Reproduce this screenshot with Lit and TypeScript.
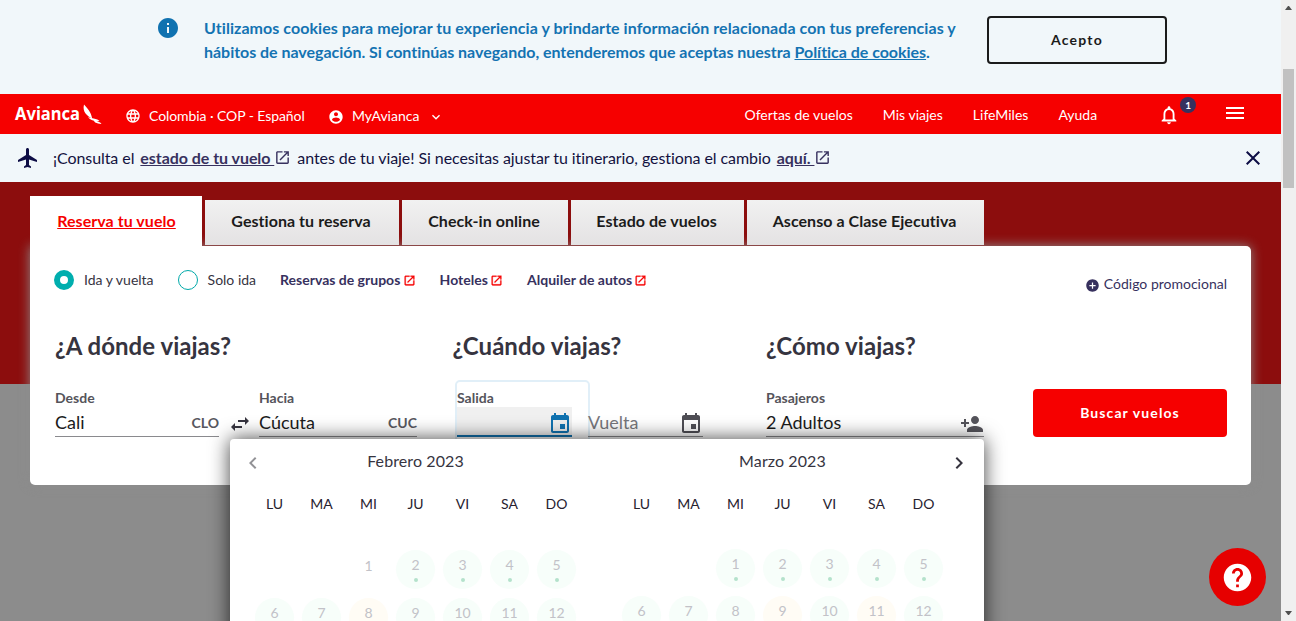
import { LitElement, html, css, svg, nothing } from "lit";
import { customElement, property } from "lit/decorators.js";

const DISC = "M12 2C6.48 2 2 6.48 2 12s4.48 10 10 10 10-4.48 10-10S17.52 2 12 2z";

const ICONS: Record<string, string> = {
  info: DISC + "m1 15h-2v-6h2v6zm0-8h-2V7h2v2z",
  globe:
    "M11.99 2C6.47 2 2 6.48 2 12s4.47 10 9.99 10C17.52 22 22 17.52 22 12S17.52 2 11.99 2zm6.93 6h-2.95c-.32-1.25-.78-2.45-1.38-3.56 1.84.63 3.37 1.91 4.33 3.56zM12 4.04c.83 1.2 1.48 2.53 1.91 3.96h-3.82c.43-1.43 1.08-2.76 1.91-3.96zM4.26 14C4.1 13.36 4 12.69 4 12s.1-1.36.26-2h3.38c-.08.66-.14 1.32-.14 2 0 .68.06 1.34.14 2H4.26zm.82 2h2.95c.32 1.25.78 2.45 1.38 3.56-1.84-.63-3.37-1.9-4.33-3.56zm2.95-8H5.08c.96-1.66 2.49-2.93 4.33-3.56C8.81 5.55 8.35 6.75 8.03 8zM12 19.96c-.83-1.2-1.48-2.53-1.91-3.96h3.82c-.43 1.43-1.08 2.76-1.91 3.96zM14.34 14H9.66c-.09-.66-.16-1.32-.16-2 0-.68.07-1.35.16-2h4.68c.09.65.16 1.32.16 2 0 .68-.07 1.34-.16 2zm.25 5.56c.6-1.11 1.06-2.31 1.38-3.56h2.95c-.96 1.65-2.49 2.93-4.33 3.56zM16.36 14c.08-.66.14-1.32.14-2 0-.68-.06-1.34-.14-2h3.38c.16.64.26 1.31.26 2s-.1 1.36-.26 2h-3.38z",
  account:
    DISC +
    "m0 3c1.66 0 3 1.34 3 3s-1.34 3-3 3-3-1.34-3-3 1.34-3 3-3zm0 14.2c-2.5 0-4.71-1.28-6-3.22.03-1.99 4-3.08 6-3.08 1.99 0 5.97 1.09 6 3.08-1.29 1.94-3.5 3.22-6 3.22z",
  down: "M7.41 8.59L12 13.17l4.59-4.58L18 10l-6 6-6-6z",
  bell: "M12 22c1.1 0 2-.9 2-2h-4c0 1.1.9 2 2 2zm6-6v-5c0-3.07-1.63-5.64-4.5-6.32V4c0-.83-.67-1.5-1.5-1.5s-1.5.67-1.5 1.5v.68C7.64 5.36 6 7.92 6 11v5l-2 2v1h16v-1l-2-2zm-2 1H8v-6c0-2.48 1.51-4.5 4-4.5s4 2.02 4 4.5v6z",
  menu: "M3 18h18v-2H3v2zm0-5h18v-2H3v2zm0-7v2h18V6H3z",
  plane:
    "M21 16v-2l-8-5V3.5c0-.83-.67-1.5-1.5-1.5S10 2.67 10 3.5V9l-8 5v2l8-2.5V19l-2 1.5V22l3.5-1 3.5 1v-1.5L13 19v-5.5l8 2.5z",
  open: "M19 19H5V5h7V3H5c-1.11 0-2 .9-2 2v14c0 1.1.89 2 2 2h14c1.1 0 2-.9 2-2v-7h-2v7zM14 3v2h3.59l-9.83 9.83 1.41 1.41L19 6.41V10h2V3h-7z",
  close:
    "M19 6.41L17.59 5 12 10.59 6.41 5 5 6.41 10.59 12 5 17.59 6.41 19 12 13.41 17.59 19 19 17.59 13.41 12z",
  plus: DISC + "m5 11h-4v4h-2v-4H7v-2h4V7h2v4h4v2z",
  swap: "M6.99 11L3 15l3.99 4v-3H14v-2H6.99v-3zM21 9l-3.99-4v3H10v2h7.01v3L21 9z",
  event:
    "M17 12h-5v5h5v-5zM16 1v2H8V1H6v2H5c-1.11 0-1.99.9-1.99 2L3 19c0 1.1.89 2 2 2h14c1.1 0 2-.9 2-2V5c0-1.1-.9-2-2-2h-1V1h-2zm3 18H5V8h14v11z",
  addPerson:
    "M15 12c2.21 0 4-1.79 4-4s-1.79-4-4-4-4 1.79-4 4 1.79 4 4 4zm-9-2V7H4v3H1v2h3v3h2v-3h3v-2H6zm9 4c-2.67 0-8 1.34-8 4v2h16v-2c0-2.66-5.33-4-8-4z",
  left: "M15.41 7.41L14 6l-6 6 6 6 1.41-1.41L10.83 12z",
  right: "M10 6L8.59 7.41 13.17 12l-4.58 4.59L10 18l6-6z",
  help:
    DISC +
    "m1 17h-2v-2h2v2zm2.07-7.75l-.9.92C13.45 12.9 13 13.5 13 15h-2v-.5c0-1.1.45-2.1 1.17-2.83l1.24-1.26c.37-.36.59-.86.59-1.41 0-1.1-.9-2-2-2s-2 .9-2 2H8c0-2.21 1.79-4 4-4s4 1.79 4 4c0 .88-.36 1.68-.93 2.25z",
};

const icon = (name: string, size: number, cls = "") => html`<svg
  class="icon ${cls}" width=${size} height=${size} viewBox="0 0 24 24" aria-hidden="true"
>${svg`<path d=${ICONS[name]}></path>`}</svg>`;

const base = css`
  * { box-sizing: border-box; }
  .icon { display: block; flex: none; fill: currentColor; }
  a { color: inherit; text-decoration: none; white-space: nowrap; }
  button { font: inherit; margin: 0; }
`;

/** One month of the date picker: weekday header and the first weeks of days. */
@customElement("month-grid")
class MonthGrid extends LitElement {
  @property() name = "";
  @property({ type: Number }) first = 0;
  @property({ attribute: false }) sale: number[] = [];
  @property({ attribute: false }) plain: number[] = [];

  static styles = [base, css`
    :host { display: block; width: 329px; }
    .name { margin: 0; text-align: center; font-size: 16px; line-height: 20px; font-weight: 400; letter-spacing: .1px; color: #36343f; }
    .week { display: grid; grid-template-columns: repeat(7, 47px); text-align: center; }
    .names { margin-top: 22px; font-size: 14px; line-height: 22px; color: #28222f; }
    .days { margin-top: var(--days-top, 35px); grid-auto-rows: var(--row, 48px); justify-items: center; font-size: 14px; line-height: 17px; color: #c2c2c8; }
    .day { display: flex; flex-direction: column; align-items: center; width: 39px; height: 39px; border-radius: 50%; padding-top: 6px; background: #f7fefa; }
    .day.sale { background: #fffcf5; }
    .day.none { background: none; padding-top: 7px; }
    .dot { width: 4px; height: 4px; border-radius: 50%; background: #b4e2cb; margin-top: 5px; }
  `];

  render() {
    const days = Array.from({ length: 12 }, (_, i) => i + 1);
    return html`
      <h3 class="name">${this.name}</h3>
      <div class="week names">${["LU", "MA", "MI", "JU", "VI", "SA", "DO"].map((d) => html`<span>${d}</span>`)}</div>
      <div class="week days">
        ${Array.from({ length: this.first }, () => html`<span></span>`)}
        ${days.map((d) => {
          const none = this.plain.includes(d);
          const kind = none ? "none" : this.sale.includes(d) ? "sale" : "";
          return html`<span class="day ${kind}">${d}${none ? nothing : html`<i class="dot"></i>`}</span>`;
        })}
      </div>`;
  }
}

@customElement("app-root")
class AppRoot extends LitElement {
  static styles = [base, css`
    :host { display: flex; height: 621px; overflow: hidden; font-family: Lato, "Liberation Sans", sans-serif; color: #1b1b1b; background: #8c8c8c; }
    .page { flex: 1; min-width: 0; position: relative; height: 621px; overflow: hidden; }

    .cookies { display: flex; height: 94px; background: #f1f7fa; padding: 16px 0 0 158px; }
    .cookies .icon { margin: 0 24px 0 -2px; }
    .info { color: #1072b0; }
    .cookies p { margin: 0; width: 783px; color: #1473b2; font-size: 16px; line-height: 24px; font-weight: 700; white-space: nowrap; letter-spacing: -.03px; }
    .cookies .lead { letter-spacing: .055px; }
    .cookies p a, .alert a { text-decoration: underline; }
    .accept { width: 180px; height: 48px; border: 2px solid #1b1b1b; border-radius: 4px; background: none; color: #1b1b1b; font-size: 14px; font-weight: 700; letter-spacing: 1.2px; padding: 0 6px 2px; }

    .top { display: flex; height: 40px; background: #f60000; color: #fff; font-size: 14px; line-height: 20px; }
    .brand { display: block; margin: 6px 0 0 14px; width: 92px; flex: none; fill: #fff; }
    .brand text { font-family: "Noto Sans", sans-serif; font-weight: 700; font-size: 18px; }
    .loc { display: flex; margin: 12px 0 0 19px; width: 204px; letter-spacing: -.08px; }
    .loc .icon { margin: 2px 8px 0 0; }
    .me { display: flex; margin-top: 12px; width: 415px; }
    .me .icon { margin-top: 2px; }
    .me .who { margin: 3px 8px 0 -1px; }
    .me .icon.arrow { margin: 3px 0 0 9px; }
    .nav { display: flex; gap: 30px; margin: 11px 0 0 .5px; letter-spacing: .01px; }
    .notify { position: relative; margin: 10px 0 0 61px; width: 22px; flex: none; }
    .badge { position: absolute; left: 22px; top: -7px; width: 16px; height: 16px; border-radius: 50%; background: #37315e; font-size: 10px; line-height: 16px; font-weight: 700; text-align: center; }
    .burger { margin: 7px 0 0 43px; }

    .alert { display: flex; height: 48px; background: #f1f7fa; color: #13123f; font-size: 16px; line-height: 24px; padding: 12px 0 0 17px; white-space: nowrap; }
    .alert .plane { margin: 0 13px 0 -1px; color: #0d0d45; }
    .alert span { letter-spacing: -.07px; }
    .alert a { font-weight: 700; color: #37315e; margin-left: 6px; white-space: pre; letter-spacing: -.05px; }
    .alert .ext { color: #37315e; margin: 3px 6px 0 0; }
    .alert .x { margin: 0 16px 0 auto; color: #0d0d45; }

    .hero { height: 202px; background: #8c0d0d; padding: 14px 30px 0; }
    .tabs { display: flex; gap: 3px; align-items: flex-start; height: 50px; font-size: 16px; font-weight: 700; line-height: 20px; text-align: center; letter-spacing: .05px; }
    .tab { flex: none; height: 45px; margin-top: 4px; padding: 11px 2px 0 0; background: linear-gradient(#f1f1f1, #e4e2e3); }
    .tab.on { height: 50px; margin-top: 0; padding: 15px 0 0 1px; background: #fff; color: #f60000; text-decoration: underline; width: 172px; }
    .tab.t1 { width: 194px; } .tab.t2 { width: 166px; } .tab.t3 { width: 173px; } .tab.t4 { width: 237px; }

    .card { height: 239px; background: #fff; border-radius: 0 5px 5px 5px; box-shadow: 0 0 12px #8c8c8c; padding: 0 24px; }
    .options { display: flex; height: 79px; padding-top: 24px; font-size: 14px; line-height: 20px; color: #36343f; }
    .radio { width: 20px; height: 20px; border: 1px solid #00a9a9; border-radius: 50%; margin-right: 10px; }
    .radio.on { border: 6.5px solid #00aeae; }
    .opt { display: flex; margin-right: 24px; }
    .ext-link { display: flex; font-weight: 700; color: #37315e; margin-right: 24px; }
    .ext-link .icon { color: #f60000; stroke: #f60000; stroke-width: .5; margin: 4px 0 0 2.300px; }
    .promo { display: flex; margin: 4px 0 0 auto; color: #37315e; }
    .promo .icon { margin: 4px 4px 0 0; }

    .heads { display: grid; grid-template-columns: 397.5px 313.500px 1fr; padding-left: 1px; height: 66px; }
    .heads h2 { margin: 6px 0 0; font-size: 24px; line-height: 30px; font-weight: 700; color: #36343f; letter-spacing: .04px; }
    .fields { display: flex; height: 48px; }
    .field { border-bottom: 1px solid #8a8a8e; font-size: 18px; line-height: 24px; height: 46px; flex: none; position: relative; }
    .label { display: block; position: relative; font-size: 14px; line-height: 18px; font-weight: 700; color: #55545b; margin-top: -2px; height: 21px; }
    .row { display: flex; justify-content: space-between; white-space: nowrap; }
    .code { font-size: 14px; font-weight: 700; color: #58585f; padding-top: 1px; }
    .from { width: 164px; margin-left: 1px; }
    .swap { margin: 21px 7px 0 9px; color: #36343f; }
    .to { width: 158px; }
    .out { width: 115px; margin-left: 40px; border-bottom: 2px solid #1072b0; }
    .out .row { background: #f0f0f0; height: 28px; justify-content: flex-end; margin-top: -3px; padding: 5px 0 0; color: #1072b0; position: relative; }
    .ring { position: absolute; left: -2px; top: -11px; width: 135px; height: 80px; border: 2px solid #e1eff8; border-radius: 5px; }
    .back { width: 115px; margin-left: 16px; color: #77777c; padding-top: 19px; }
    .back .icon { color: #4f4e55; margin-top: 2px; }
    .pax { width: 218px; margin-left: 63px; }
    .pax .icon { color: #55545b; margin: 2px 0 0; }
    .search { width: 194px; height: 48px; margin: -2px 0 0 49px; border: 0; border-radius: 4px; background: #f60000; color: #fff; font-size: 14px; font-weight: 700; letter-spacing: 1.1px; padding: 0 6px 2px; flex: none; }

    .picker { position: absolute; left: 230px; top: 439px; width: 754px; height: 240px; background: #fff; border-radius: 4px; box-shadow: 0 0 20px rgba(0, 0, 0, .75); display: flex; gap: 38px; padding: 12px 0 0 21px; z-index: 2; }
    .picker .march { --days-top: 34px; --row: 47px; }
    .prev, .next { position: absolute; top: 12px; }
    .prev { left: 11px; color: #929296; }
    .next { right: 13px; color: #36343f; }
    .help { position: absolute; left: 1209px; top: 548px; width: 57px; height: 58px; border: 0; border-radius: 50%; background: #e60000; color: #fff; display: grid; place-items: center; padding: 0; z-index: 3; }

    .scroll { width: 15px; flex: none; background: #f0f0f0; display: flex; flex-direction: column; align-items: center; padding: 6px 0 6px; }
    .arrow-up { width: 7px; border: 3.5px solid transparent; border-bottom: 4px solid #505050; border-top: 0; }
    .arrow-down { width: 7px; border: 3.5px solid transparent; border-top: 4px solid #505050; border-bottom: 0; margin-top: auto; }
    .thumb { width: 11px; height: 119px; background: #c1c1c1; margin-top: 59px; }
  `];

  render() {
    return html`
      <main class="page">
        <section class="cookies">
          ${icon("info", 24, "info")}
          <p><span class="lead">Utilizamos cookies para mejorar tu experiencia y brindarte información relacionada con tus preferencias y</span><br />hábitos de navegación. Si continúas navegando, entenderemos que aceptas nuestra <a>Política de cookies</a>.</p>
          <button class="accept">Acepto</button>
        </section>

        <header class="top">
          <svg class="brand" width="92" height="30" viewBox="0 0 92 30">
            <text x="1" y="20" textLength="65" lengthAdjust="spacingAndGlyphs">Avianca</text>
            <path d="M70 4.400C73.600 8.500 77 11.500 78.200 18.500C73.500 16 68 12 70 4.400zM74 17.300C79 18.200 83 19 85.500 20.800C84 21.100 83 21 81.800 20.800C84 21.500 86.500 22.300 87.500 24C82 23.800 80.500 22 79.500 20.600C78 20.200 75.500 19.200 74 17.300z"></path>
          </svg>
          <div class="loc">${icon("globe", 16)}<span>Colombia · COP - Español</span></div>
          <div class="me">${icon("account", 16, "who")}<span>MyAvianca</span>${icon("down", 16, "arrow")}</div>
          <nav class="nav"><a>Ofertas de vuelos</a><a>Mis viajes</a><a>LifeMiles</a><a>Ayuda</a></nav>
          <div class="notify">${icon("bell", 22)}<span class="badge">1</span></div>
          ${icon("menu", 24, "burger")}
        </header>

        <section class="alert">
          ${icon("plane", 24, "plane")}
          <span>¡Consulta el</span><a>estado de tu vuelo </a>${icon("open", 17, "ext")}
          <span>antes de tu viaje! Si necesitas ajustar tu itinerario, gestiona el cambio</span><a>aquí. </a>${icon("open", 17, "ext")}
          ${icon("close", 24, "x")}
        </section>

        <section class="hero">
          <nav class="tabs">
            <a class="tab on">Reserva tu vuelo</a>
            <a class="tab t1">Gestiona tu reserva</a>
            <a class="tab t2">Check-in online</a>
            <a class="tab t3">Estado de vuelos</a>
            <a class="tab t4">Ascenso a Clase Ejecutiva</a>
          </nav>
          <div class="card">
            <div class="options">
              <label class="opt"><i class="radio on"></i>Ida y vuelta</label>
              <label class="opt"><i class="radio"></i>Solo ida</label>
              <a class="ext-link">Reservas de grupos${icon("open", 13)}</a>
              <a class="ext-link">Hoteles${icon("open", 13)}</a>
              <a class="ext-link">Alquiler de autos${icon("open", 13)}</a>
              <a class="promo">${icon("plus", 15)}Código promocional</a>
            </div>
            <div class="heads"><h2>¿A dónde viajas?</h2><h2>¿Cuándo viajas?</h2><h2>¿Cómo viajas?</h2></div>
            <div class="fields">
              <div class="field from"><span class="label">Desde</span><div class="row">Cali<span class="code">CLO</span></div></div>
              ${icon("swap", 24, "swap")}
              <div class="field to"><span class="label">Hacia</span><div class="row">Cúcuta<span class="code">CUC</span></div></div>
              <div class="field out"><span class="ring"></span><span class="label">Salida</span><div class="row">${icon("event", 24)}</div></div>
              <div class="field back"><div class="row">Vuelta${icon("event", 24)}</div></div>
              <div class="field pax"><span class="label">Pasajeros</span><div class="row">2 Adultos${icon("addPerson", 24)}</div></div>
              <button class="search">Buscar vuelos</button>
            </div>
          </div>
        </section>

        <section class="picker">
          ${icon("left", 24, "prev")}
          <month-grid name="Febrero 2023" .first=${2} .sale=${[8]} .plain=${[1]}></month-grid>
          <month-grid class="march" name="Marzo 2023" .first=${2} .sale=${[9, 11]}></month-grid>
          ${icon("right", 24, "next")}
        </section>
        <button class="help">${icon("help", 33)}</button>
      </main>
      <aside class="scroll"><i class="arrow-up"></i><i class="thumb"></i><i class="arrow-down"></i></aside>
    `;
  }
}
